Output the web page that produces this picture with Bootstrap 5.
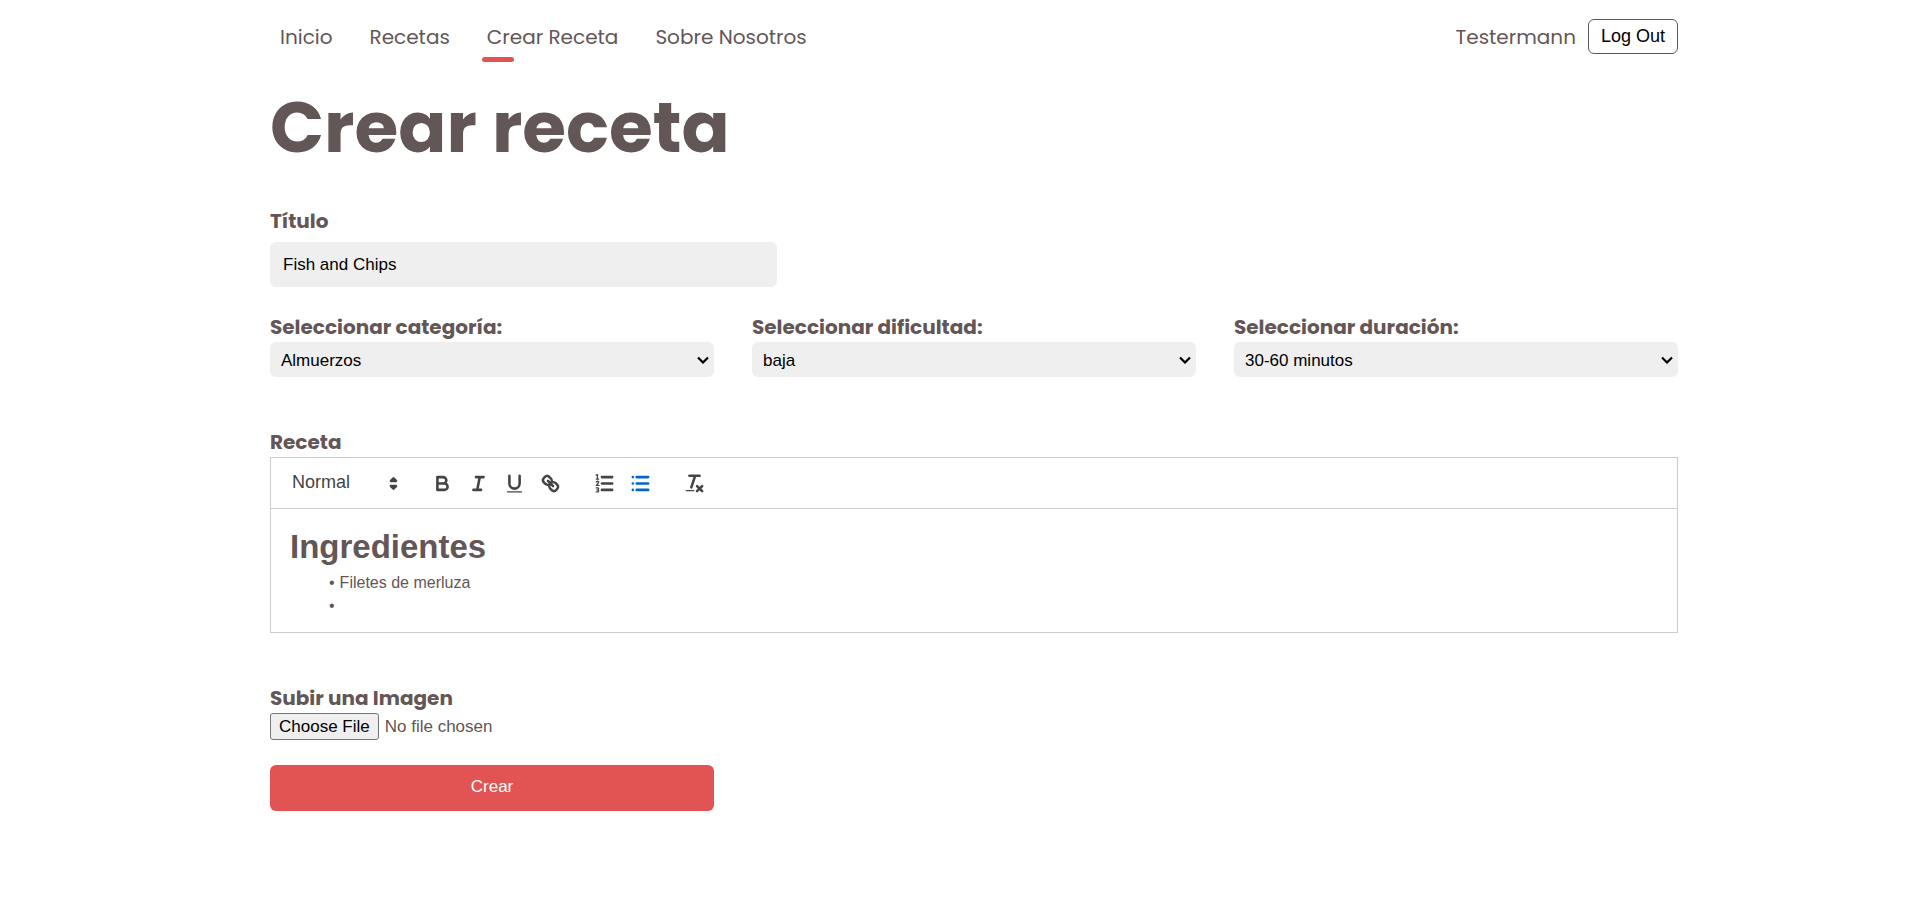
<!DOCTYPE html>
<html lang="es">
<head>
<meta charset="utf-8">
<meta name="viewport" content="width=device-width, initial-scale=1">
<title>Crear receta</title>
<link href="https://cdn.jsdelivr.net/npm/bootstrap@5.3.0/dist/css/bootstrap.min.css" rel="stylesheet">
<style>
  :root { --ink: #635656; --accent: #e25353; --field: #efefef; }
  body { font-family: "Liberation Sans", Arial, sans-serif; font-size: 17px; color: var(--ink); background: #fff; }
  .page-wrap { max-width: 1436px; padding: 0 0 0 28px; }
  .site-nav, .page-title, .field-label { font-family: Poppins, Inter, sans-serif; }
  .site-nav { height: 73px; font-size: 20px; font-weight: 400; }
  .site-nav .nav { gap: 27px; padding-left: 5px; }
  .site-nav .nav-link { position: relative; padding: 5px 5px 4px; color: var(--ink); line-height: 32px; }
  .site-nav .nav-link.active::after { content: ""; position: absolute; left: 0; bottom: -5px; width: 32px; height: 5px; border-radius: 3px; background: var(--accent); }
  .btn-logout { height: 35px; padding: 0 12px; border: 1px solid var(--ink); border-radius: 6px; font: 18px "Liberation Sans", Arial, sans-serif; color: #000; background: #fff; }
  .page-title { font-size: 71px; font-weight: 700; line-height: 108px; margin-bottom: 25px; }
  .field-label { display: block; font-size: 20px; font-weight: 700; line-height: 30px; }
  .title-input { display: block; width: 36%; height: 45px; padding: 0 13px; border: 0; border-radius: 6px; background: var(--field); color: #000; margin-top: 6px; }
  .pick-row { --bs-gutter-x: 38px; margin-top: 25px; }
  .pick-field { appearance: none; width: 100%; height: 35px; padding: 2px 24px 0 11px; border: 0; border-radius: 6px; color: #000;
    background: var(--field) url("data:image/svg+xml,%3Csvg xmlns='http://www.w3.org/2000/svg' viewBox='0 0 12 8'%3E%3Cpath d='M1 1.500L6 6.500l5-5' fill='none' stroke='%23000' stroke-width='2.200'/%3E%3C/svg%3E") no-repeat right 5px center / 12px 8px; }
  .editor-block { margin-top: 50px; }
  .editor { border: 1px solid #ccc; }
  .editor-bar { height: 51px; padding: 0 10px; border-bottom: 1px solid #ccc; color: #444; }
  .format-pick { appearance: none; width: 124px; height: 30px; margin-right: 19px; padding: 0 0 2px 11px; border: 0; color: #444; font-size: 18px;
    background: url("data:image/svg+xml,%3Csvg xmlns='http://www.w3.org/2000/svg' viewBox='0 0 18 18'%3E%3Cg fill='%23444' stroke='%23444' stroke-width='2' stroke-linejoin='round'%3E%3Cpath d='M7 11l2 2 2-2zM7 7l2-2 2 2z'/%3E%3C/g%3E%3C/svg%3E") no-repeat right 0 center / 23px; }
  .tool-group { margin-right: 18px; }
  .tool-btn { width: 36px; height: 30px; padding: 0; border: 0; background: none; color: #444; }
  .tool-btn.on { color: #06c; }
  .tool-btn svg { display: block; width: 23px; height: 23px; margin: 0 auto; }
  .ln { fill: none; stroke: currentColor; stroke-width: 2; stroke-linecap: round; stroke-linejoin: round; }
  .fine { stroke-width: 1; }
  .editor-body { padding: 15px 19px; font-size: 16px; line-height: 23px; }
  .editor-body h1 { font-size: 33px; font-weight: 700; line-height: 46px; margin: 0 0 1px; }
  .editor-body ul { list-style: none; margin: 0; padding-left: 39px; }
  .editor-body li::before { content: "•"; margin-right: 5px; }
  .file-block { margin-top: 50px; }
  .file-pick { display: block; line-height: 22px; }
  .file-pick::file-selector-button { height: 27px; padding: 0 8px; margin-right: 6px; border: 1px solid #767676; border-radius: 3px; background: var(--field); color: #000; }
  .btn-create { height: 46px; margin-top: 25px; padding: 0 0 2px; border: 0; border-radius: 6px; background: var(--accent); color: #fff; }
</style>
<script src="https://cdn.jsdelivr.net/npm/bootstrap@5.3.0/dist/js/bootstrap.bundle.min.js"></script>
</head>
<body>
<div class="container-fluid page-wrap">
  <header class="site-nav d-flex align-items-center justify-content-between">
    <nav class="nav">
      <a class="nav-link" href="#">Inicio</a>
      <a class="nav-link" href="#">Recetas</a>
      <a class="nav-link active" href="#">Crear Receta</a>
      <a class="nav-link" href="#">Sobre Nosotros</a>
    </nav>
    <div class="d-flex align-items-center gap-2">
      <span class="pe-1">Testermann</span>
      <button type="button" class="btn-logout">Log Out</button>
    </div>
  </header>
  <main>
    <h1 class="page-title">Crear receta</h1>
    <form>
      <label class="field-label" for="titulo">Título</label>
      <input class="title-input" id="titulo" type="text" value="Fish and Chips">
      <div class="row pick-row">
        <div class="col-4">
          <label class="field-label" for="categoria">Seleccionar categoría:</label>
          <select class="pick-field" id="categoria"><option>Almuerzos</option></select>
        </div>
        <div class="col-4">
          <label class="field-label" for="dificultad">Seleccionar dificultad:</label>
          <select class="pick-field" id="dificultad"><option>baja</option></select>
        </div>
        <div class="col-4">
          <label class="field-label" for="duracion">Seleccionar duración:</label>
          <select class="pick-field" id="duracion"><option>30-60 minutos</option></select>
        </div>
      </div>
      <section class="editor-block">
        <span class="field-label" id="receta-label">Receta</span>
        <div class="editor">
          <div class="editor-bar d-flex align-items-center">
            <select class="format-pick" aria-label="Formato"><option>Normal</option></select>
            <div class="tool-group d-flex">
              <button type="button" class="tool-btn" aria-label="Negrita"><svg viewBox="0 0 18 18" class="ln"><path d="M5 4h4.500a2.500 2.500 0 0 1 0 5H5zM5 9h5.500a2.500 2.500 0 0 1 0 5H5z"/></svg></button>
              <button type="button" class="tool-btn" aria-label="Cursiva"><svg viewBox="0 0 18 18" class="ln"><path d="M7 4h6M5 14h6M8 14l2-10"/></svg></button>
              <button type="button" class="tool-btn" aria-label="Subrayado"><svg viewBox="0 0 18 18"><path class="ln" d="M5 3v6a4 4 0 0 0 8 0V3"/><rect x="3" y="15" width="12" height="1" rx=".5" fill="currentColor"/></svg></button>
              <button type="button" class="tool-btn" aria-label="Enlace"><svg viewBox="0 0 18 18" class="ln"><path d="M7 7l4 4M8.900 4.577a3.476 3.476 0 0 1 .36 4.679A3.476 3.476 0 0 1 4.577 8.900C3.185 7.500 2.035 6.400 4.217 4.217S7.500 3.185 8.900 4.577zM13.423 9.100a3.476 3.476 0 0 0-4.679-.36 3.476 3.476 0 0 0 .36 4.679c1.392 1.392 2.500 2.542 4.679.36S14.815 10.500 13.423 9.100z"/></svg></button>
            </div>
            <div class="tool-group d-flex">
              <button type="button" class="tool-btn" aria-label="Lista numerada"><svg viewBox="0 0 18 18"><path class="ln" d="M7 4h8M7 9h8M7 14h8"/><path class="ln fine" d="M2.500 2.500l1-.5v3.500M2.500 5.500h2M2.500 7.700q2-1 2 .2 0 .8-2 2.600h2.200M2.500 12.500h1.200q.9.200.7.900-.2.600-1.200.6 1.300.1 1.300.9-.1 1-2 .6"/></svg></button>
              <button type="button" class="tool-btn on" aria-label="Lista con viñetas"><svg viewBox="0 0 18 18" class="ln"><path d="M6 4h9M6 9h9M6 14h9M3 4h0M3 9h0M3 14h0"/></svg></button>
            </div>
            <button type="button" class="tool-btn" aria-label="Quitar formato"><svg viewBox="0 0 18 18"><path class="ln" d="M5 3h8M6.500 12L9.500 3M11 11l4 4M15 11l-4 4"/><rect x="2" y="14" width="7" height="1" rx=".5" fill="currentColor"/></svg></button>
          </div>
          <div class="editor-body" contenteditable="true" role="textbox" aria-labelledby="receta-label">
            <h1>Ingredientes</h1>
            <ul><li>Filetes de merluza</li><li></li></ul>
          </div>
        </div>
      </section>
      <section class="file-block">
        <label class="field-label" for="imagen">Subir una Imagen</label>
        <input class="file-pick" id="imagen" type="file">
      </section>
      <div class="row pick-row mt-0">
        <div class="col-4"><button type="submit" class="btn-create w-100">Crear</button></div>
      </div>
    </form>
  </main>
</div>
</body>
</html>
